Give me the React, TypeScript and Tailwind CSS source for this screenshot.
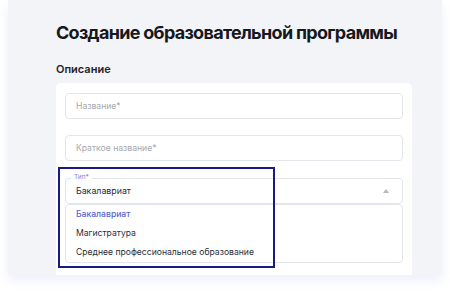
import React from 'react';

const options = ['Бакалавриат', 'Магистратура', 'Среднее профессиональное образование'];

const TextField = ({ placeholder }: { placeholder: string }) => (
  <div className="h-[26px] w-full rounded border border-[#e2e5ea] bg-white flex items-center px-[10px] text-[8.6px] text-[#a3a8b0]">
    {placeholder}
  </div>
);

export default function App() {
  return (
    <div className="w-[450px] h-[292px] bg-white overflow-hidden relative" style={{ fontFamily: 'Inter, "Noto Sans", sans-serif' }}>
      <div className="ml-[8px] w-[434px] h-[275px] bg-[#f2f4f8] shadow-[0_6px_10px_rgba(120,130,220,0.12)] pl-[48px] pt-[21px] overflow-hidden">
        <h1 className="text-[18px] leading-[24px] font-bold text-[#16181d] tracking-[-0.7px]">Создание образовательной программы</h1>
        <h2 className="mt-[17px] text-[11px] leading-[14px] font-semibold text-[#1f2228]">Описание</h2>

        {/* карточка формы */}
        <div className="mt-[7px] w-[356px] h-[200px] bg-white rounded-[5px] px-[9px] pt-[10px]">
          <TextField placeholder="Название*" />
          <div className="mt-[16px]">
            <TextField placeholder="Краткое название*" />
          </div>

          {/* селект с открытым списком */}
          <div className="mt-[17px] relative">
            <div className="h-[26px] rounded border border-[#e2e5ea] flex items-center justify-between px-[10px]">
              <span className="text-[8.8px] text-[#2a2d33]">Бакалавриат</span>
              <svg width="6" height="4" viewBox="0 0 6 4" className="mr-[3px]">
                <path d="M0 4 L3 0 L6 4 Z" fill="#b4b8bf" />
              </svg>
            </div>
            <span className="absolute left-[6px] top-[-5px] bg-white px-[3px] text-[6.5px] leading-[8px] text-[#7b86d6]">Тип*</span>
            <div className="rounded border border-[#e2e5ea] bg-white">
              {options.map((o, i) => (
                <div key={o} className={`h-[19px] flex items-center px-[10px] text-[8.6px] ${i === 0 ? 'text-[#5665d0] font-medium' : 'text-[#2a2d33]'}`}>
                  {o}
                </div>
              ))}
            </div>
          </div>
        </div>
      </div>

      {/* рамка-выделение */}
      <div className="absolute left-[58px] top-[167px] w-[217px] h-[101px] border-2 border-[#1a1a86]" />
    </div>
  );
}
